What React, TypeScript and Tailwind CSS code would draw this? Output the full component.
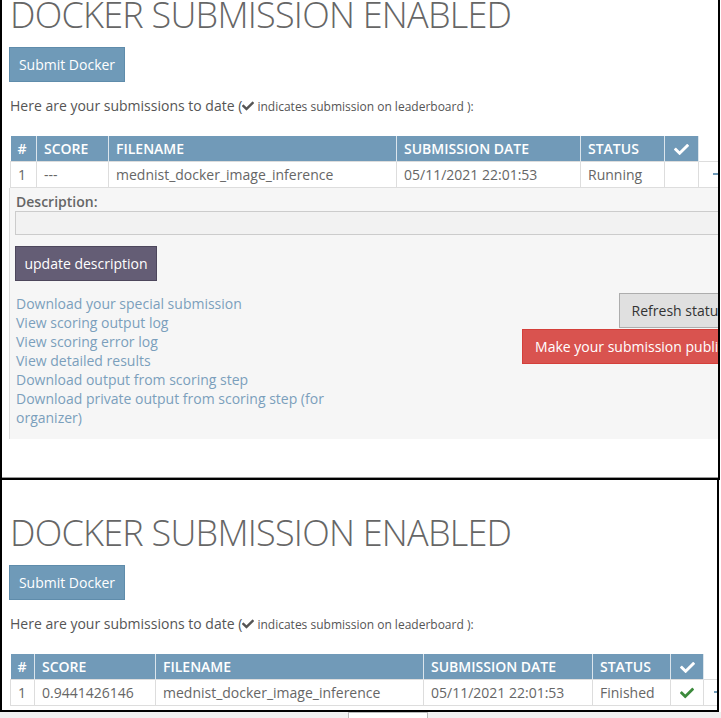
import { FaCheck } from 'react-icons/fa';

type Col = { label: React.ReactNode; w: string };

const topCols: Col[] = [
  { label: '#', w: 'w-[26px]' },
  { label: 'SCORE', w: 'w-[72px]' },
  { label: 'FILENAME', w: 'w-[288px]' },
  { label: 'SUBMISSION DATE', w: 'w-[184px]' },
  { label: 'STATUS', w: 'w-[84px]' },
  { label: <FaCheck className="inline-block w-[15px] h-[15px] -mt-[2px]" />, w: 'w-[34px]' },
];

const bottomCols: Col[] = [
  { label: '#', w: 'w-[24px]' },
  { label: 'SCORE', w: 'w-[121px]' },
  { label: 'FILENAME', w: 'w-[268px]' },
  { label: 'SUBMISSION DATE', w: 'w-[169px]' },
  { label: 'STATUS', w: 'w-[78px]' },
  { label: <FaCheck className="inline-block w-[15px] h-[15px] -mt-[2px]" />, w: 'w-[33px]' },
];

function Heading({ top }: { top: string }) {
  return (
    <h1 className={`${top} ml-px text-[36px] leading-none font-light text-[#666] tracking-[-0.75px] whitespace-nowrap`}>
      DOCKER SUBMISSION ENABLED
    </h1>
  );
}

function Intro() {
  return (
    <>
      <button className="mt-[14px] h-[35px] w-[116px] bg-[#6f9ab8] border border-[#5f8cab] text-white text-[14px]">
        Submit Docker
      </button>
      <p className="mt-[14px] ml-px text-[14px] leading-5 text-[#555] whitespace-nowrap">
        Here are your submissions to date (
        <FaCheck className="inline-block w-[12px] h-[12px] -mt-[3px] text-[#555]" />
        <span className="text-[12px]"> indicates submission on leaderboard ):</span>
      </p>
    </>
  );
}

function SubmissionTable({
  cols,
  row,
  finished,
  dashPad,
}: {
  cols: Col[];
  row: string[];
  finished?: boolean;
  dashPad: string;
}) {
  return (
    <table className="mt-[19px] ml-px w-[728px] table-fixed border-collapse text-[14px] whitespace-nowrap">
      <thead>
        <tr className="h-[25px]">
          {cols.map((c, i) => (
            <th
              key={i}
              className={`${c.w} bg-[#719ab8] text-white font-semibold px-[7px] border-r border-[#dbe5ec] ${i === cols.length - 1 ? 'text-center' : 'text-left'}`}
            >
              {c.label}
            </th>
          ))}
          <th className="w-[40px] bg-white"></th>
        </tr>
      </thead>
      <tbody>
        <tr className="h-[26px] text-[#666]">
          {row.map((v, i) => (
            <td key={i} className="px-[7px] border border-[#ddd]">
              {v}
            </td>
          ))}
          <td className="border border-[#ddd] text-center text-[#3c8a3c]">
            {finished ? <FaCheck className="inline-block w-[14px] h-[14px] -mt-[2px]" /> : null}
          </td>
          <td className={`border-y border-l border-[#ddd] ${dashPad}`}>
            <div className="w-[10px] h-[2px] bg-[#6f9ab8]"></div>
          </td>
        </tr>
      </tbody>
    </table>
  );
}

const links = [
  'Download your special submission',
  'View scoring output log',
  'View scoring error log',
  'View detailed results',
  'Download output from scoring step',
  'Download private output from scoring step (for organizer)',
];

function Details() {
  return (
    <div className="w-[740px] bg-[#f6f6f6] border-l border-[#ddd] pl-[5px] pt-[4px] pb-[12px]">
      <div className="ml-px text-[14px] leading-[19px] font-semibold text-[#666]">Description:</div>
      <input className="block w-[730px] h-[24px] bg-[#f2f2f2] border border-[#ccc]" />
      <button className="mt-[11px] h-[35px] w-[142px] bg-[#645d75] border border-[#4d475c] text-white text-[14px]">
        update description
      </button>
      <div className="mt-[12px] flex justify-between pr-[11px]">
        <ul className="w-[312px] ml-px pt-px text-[14px] leading-[19px] text-[#7b9fbc]">
          {links.map((l) => (
            <li key={l}>
              <a href="#">{l}</a>
            </li>
          ))}
        </ul>
        <div className="flex flex-col items-end gap-px">
          <button className="h-[35px] px-[12px] bg-[#e0e0e0] border border-[#adadad] text-[#333] text-[14px] whitespace-nowrap">
            Refresh status
          </button>
          <button className="h-[35px] px-[12px] bg-[#d9534f] border border-[#d43f3a] text-white text-[14px] whitespace-nowrap">
            Make your submission public
          </button>
        </div>
      </div>
    </div>
  );
}

export default function App() {
  return (
    <div className="w-[721px] h-[718px] overflow-hidden bg-white font-['Open_Sans',sans-serif]">
      {/* first capture */}
      <div className="w-[720px] h-[480px] flex flex-col overflow-hidden border-l-2 border-r-2 border-b-2 border-black pl-[7px]">
        <Heading top="mt-[-3px]" />
        <div>
          <Intro />
        </div>
        <div className="w-[740px] shrink-0">
          <SubmissionTable
            cols={topCols}
            row={['1', '---', 'mednist_docker_image_inference', '05/11/2021 22:01:53', 'Running']}
            dashPad="pl-[14px]"
          />
          <Details />
        </div>
        <div className="mt-auto -ml-[7px] w-[740px] shrink-0 h-px bg-[#999]"></div>
      </div>

      {/* second capture */}
      <div className="w-[719px] h-[232px] flex flex-col overflow-hidden border-l-2 border-r-2 border-b-2 border-black pl-[7px]">
        <Heading top="mt-[35px]" />
        <div>
          <Intro />
        </div>
        <div className="w-[740px] shrink-0">
          <SubmissionTable
            cols={bottomCols}
            row={['1', '0.9441426146', 'mednist_docker_image_inference', '05/11/2021 22:01:53', 'Finished']}
            finished
            dashPad="pl-[10px]"
          />
        </div>
      </div>

      <div className="h-[6px] bg-[#f0f0f0] pl-[348px]">
        <div className="w-[80px] h-full bg-white border-l border-t border-r border-[#bbb]"></div>
      </div>
    </div>
  );
}
